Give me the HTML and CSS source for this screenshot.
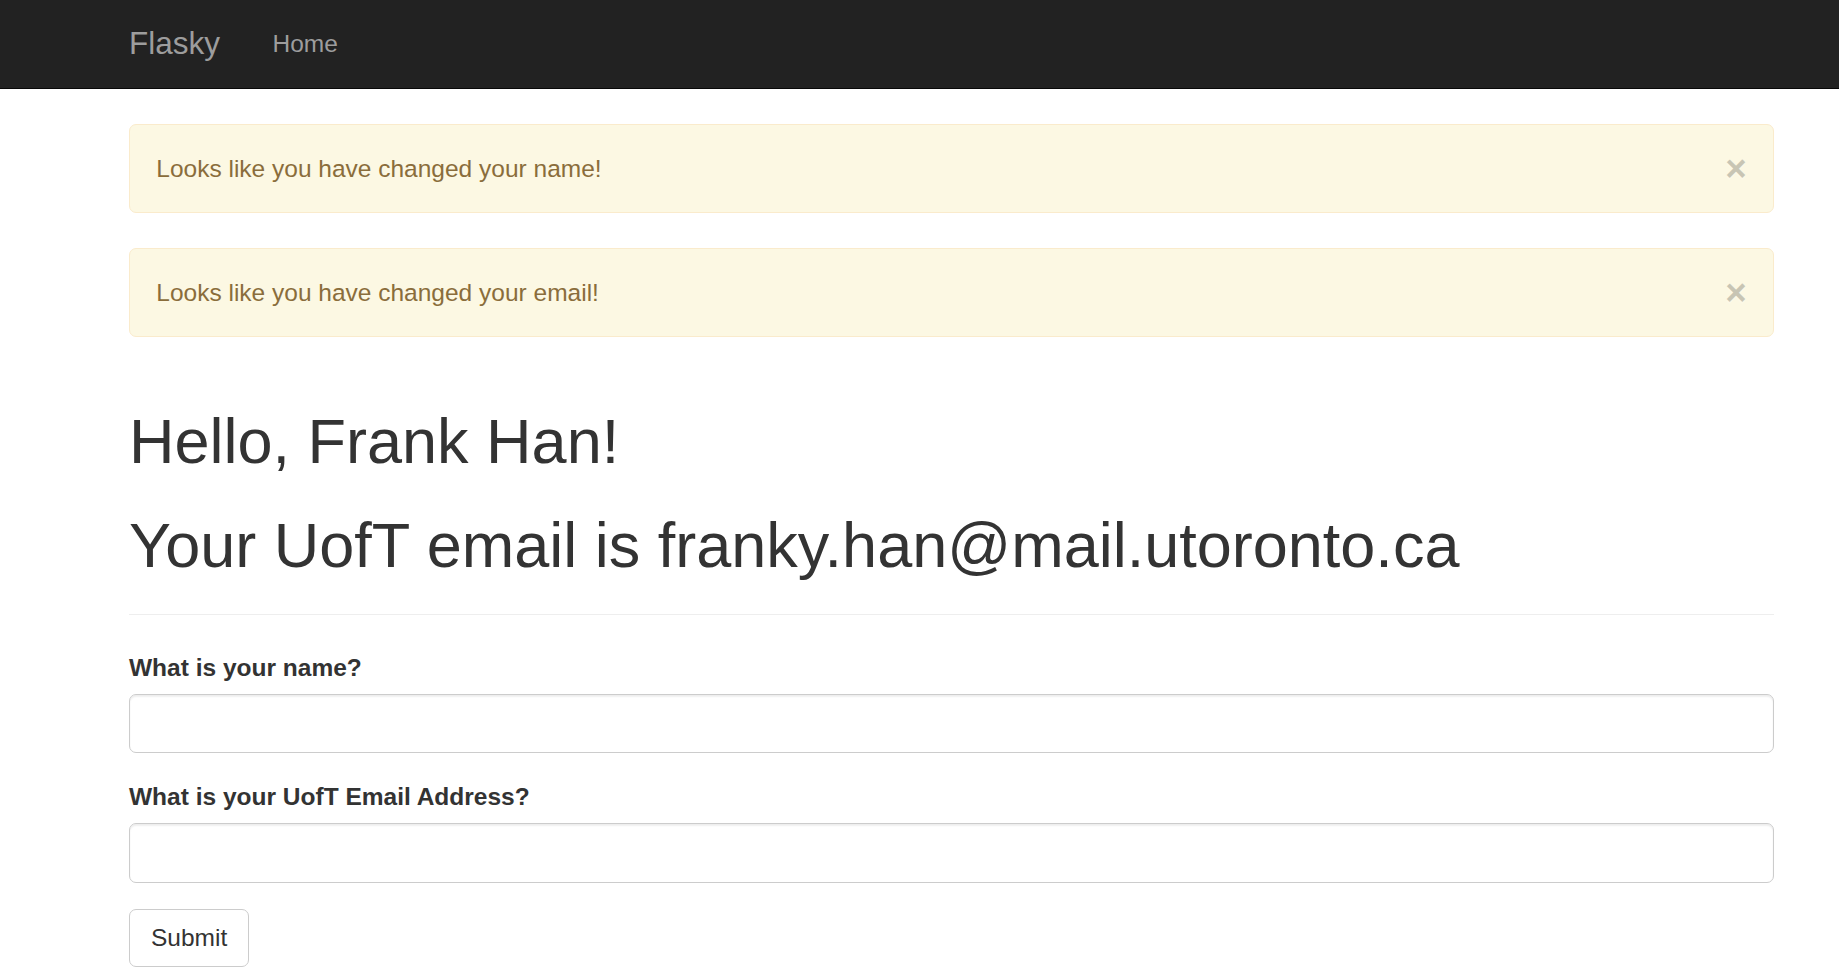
FILE: index.html
```html
<!DOCTYPE html>
<html lang="en">
<head>
<meta charset="utf-8">
<title>Flasky</title>
<link rel="stylesheet" href="styles.css">
</head>
<body>
<nav class="navbar">
  <div class="container nav-inner">
    <a class="brand" href="#">Flasky</a>
    <ul class="nav">
      <li><a href="#">Home</a></li>
    </ul>
  </div>
</nav>
<main class="container">
  <div class="alert">
    <button type="button" class="close">&times;</button>
    Looks like you have changed your name!
  </div>
  <div class="alert">
    <button type="button" class="close">&times;</button>
    Looks like you have changed your email!
  </div>
  <div class="page-header">
    <h1>Hello, Frank Han!</h1>
    <h1>Your UofT email is franky.han@mail.utoronto.ca</h1>
  </div>
  <form class="form">
    <div class="form-group">
      <label class="control-label" for="name">What is your name?</label>
      <input class="form-control" id="name" type="text">
    </div>
    <div class="form-group">
      <label class="control-label" for="email">What is your UofT Email Address?</label>
      <input class="form-control" id="email" type="text">
    </div>
    <button type="submit" class="btn">Submit</button>
  </form>
</main>
</body>
</html>
```

FILE: styles.css
```css
* {
  box-sizing: border-box;
}

html, body {
  margin: 0;
  padding: 0;
  background: #fff;
}

body {
  font-family: "Liberation Sans", Arial, Helvetica, sans-serif;
  font-size: 24.5px;
  line-height: 35px;
  color: #333;
}

.container {
  width: 1645px;
  margin-left: 129px;
}

/* Navbar */
.navbar {
  height: 89px;
  background: #222;
  border-bottom: 1px solid #080808;
}

.nav-inner {
  display: flex;
  align-items: stretch;
  height: 88px;
}

.brand {
  display: block;
  margin-left: -26.25px;
  padding: 26.25px;
  font-size: 31.5px;
  line-height: 35px;
  height: 87.5px;
  color: #9d9d9d;
  text-decoration: none;
}

.nav {
  display: flex;
  list-style: none;
  margin: 0;
  padding: 0;
}

.nav a {
  display: block;
  padding: 26.25px;
  font-size: 24.5px;
  line-height: 35px;
  color: #9d9d9d;
  text-decoration: none;
}

/* Alerts */
main.container {
  padding-top: 35px;
}

.alert {
  padding: 26px 26.25px;
  margin-bottom: 35px;
  border: 1px solid #faebcc;
  border-radius: 7px;
  background: #fcf8e3;
  color: #8a6d3b;
  font-size: 24.5px;
  line-height: 35px;
}

.close {
  float: right;
  margin: 0;
  padding: 0;
  border: 0;
  background: transparent;
  font-family: "Liberation Sans", Arial, sans-serif;
  font-size: 36.75px;
  font-weight: bold;
  line-height: 1;
  color: #000;
  opacity: 0.2;
  text-shadow: 0 1.75px 0 #fff;
  cursor: pointer;
}

/* Header */
.page-header {
  margin: 70px 0 35px;
  padding-bottom: 15.75px;
  border-bottom: 1px solid #eee;
}

.page-header h1 {
  margin: 35px 0 17.5px;
  font-size: 63px;
  line-height: 69.3px;
  font-weight: normal;
  color: #333;
}

/* Form */
.form-group {
  margin-bottom: 26.25px;
}

.control-label {
  display: inline-block;
  margin-bottom: 8.75px;
  font-weight: bold;
  font-size: 24.5px;
  line-height: 35px;
  color: #333;
}

.form-control {
  display: block;
  width: 100%;
  height: 59.5px;
  padding: 10.5px 21px;
  border: 1px solid #ccc;
  border-radius: 7px;
  background: #fff;
  box-shadow: inset 0 1.75px 1.75px rgba(0, 0, 0, 0.075);
  font-family: inherit;
  font-size: 24.5px;
  color: #555;
}

.btn {
  display: inline-block;
  padding: 10.5px 21px;
  border: 1px solid #ccc;
  border-radius: 7px;
  background: #fff;
  font-family: inherit;
  font-size: 24.5px;
  line-height: 35px;
  color: #333;
  cursor: pointer;
}
```
